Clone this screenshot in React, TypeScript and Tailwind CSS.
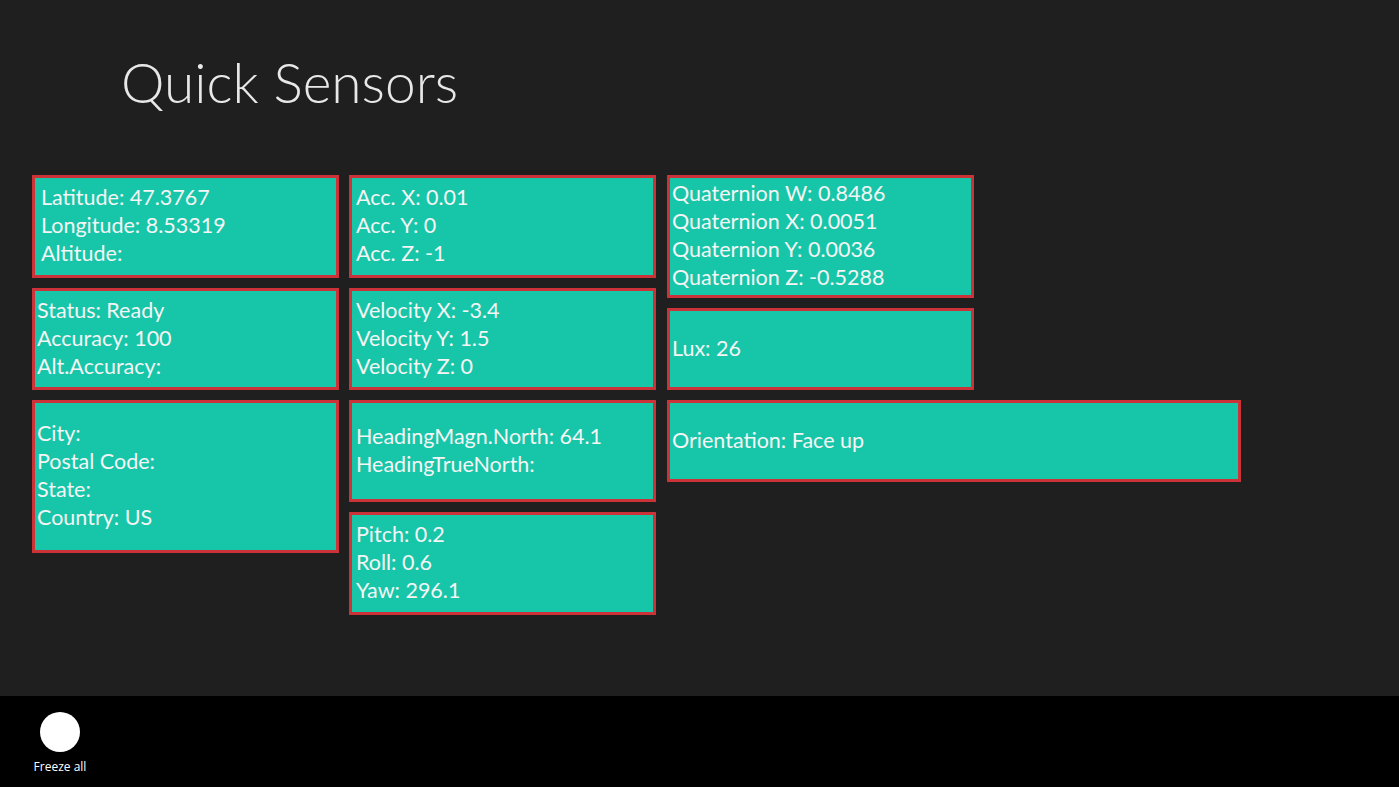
type Tile = {
  lines: string[];
  h: string;
  w?: string;
  pad?: string;
};

const columns: Tile[][] = [
  [
    { lines: ["Latitude: 47.3767", "Longitude: 8.53319", "Altitude:"], h: "h-[103px]", pad: "pl-[6px]" },
    { lines: ["Status: Ready", "Accuracy: 100", "Alt.Accuracy:"], h: "h-[102px]" },
    { lines: ["City:", "Postal Code:", "State:", "Country: US"], h: "h-[153px]" },
  ],
  [
    { lines: ["Acc. X: 0.01", "Acc. Y: 0", "Acc. Z: -1"], h: "h-[103px]", pad: "pl-[4px]" },
    { lines: ["Velocity X: -3.4", "Velocity Y: 1.5", "Velocity Z: 0"], h: "h-[102px]", pad: "pl-[4px]" },
    { lines: ["HeadingMagn.North: 64.1", "HeadingTrueNorth:"], h: "h-[102px]", pad: "pl-[4px]" },
    { lines: ["Pitch: 0.2", "Roll: 0.6", "Yaw: 296.1"], h: "h-[103px]", pad: "pl-[4px]" },
  ],
  [
    {
      lines: ["Quaternion W: 0.8486", "Quaternion X: 0.0051", "Quaternion Y: 0.0036", "Quaternion Z: -0.5288"],
      h: "h-[123px]",
    },
    { lines: ["Lux: 26"], h: "h-[82px]" },
    { lines: ["Orientation: Face up"], h: "h-[82px]", w: "w-[574px]" },
  ],
];

function SensorTile({ tile }: { tile: Tile }) {
  return (
    <div
      className={`${tile.h} ${tile.w ?? "w-[307px]"} ${tile.pad ?? "pl-[2px]"} flex flex-col justify-center border-[3px] border-[#cc3338] bg-[#17c6a8] pb-[3px] text-[21.5px] leading-[28px] text-[#f5f5f5]`}
    >
      {tile.lines.map((line) => (
        <div key={line} className="whitespace-nowrap">
          {line}
        </div>
      ))}
    </div>
  );
}

export default function App() {
  return (
    <div
      className="flex h-[787px] w-full flex-col bg-[#1f1f1f]"
      style={{ fontFamily: "Lato, 'Open Sans', sans-serif" }}
    >
      <div className="flex-1">
        <h1 className="pl-[121px] pt-[48px] text-[55px] font-light leading-[68px] text-[#e8e8e8]">
          Quick Sensors
        </h1>

        <div className="mt-[59px] flex items-start gap-[10px] pl-[32px]">
          {columns.map((col, i) => (
            <div key={i} className={`flex flex-col gap-[10px] ${i === 2 ? "ml-[1px] items-start" : ""}`}>
              {col.map((tile) => (
                <SensorTile key={tile.lines[0]} tile={tile} />
              ))}
            </div>
          ))}
        </div>
      </div>

      <div className="h-[91px] bg-black">
        <button className="ml-[28px] mt-[16px] flex w-[64px] flex-col items-center gap-[8px]">
          <span className="h-[40px] w-[40px] rounded-full bg-white" />
          <span className="text-[12px] leading-[14px] text-white" style={{ fontFamily: "'Open Sans', sans-serif" }}>
            Freeze all
          </span>
        </button>
      </div>
    </div>
  );
}
